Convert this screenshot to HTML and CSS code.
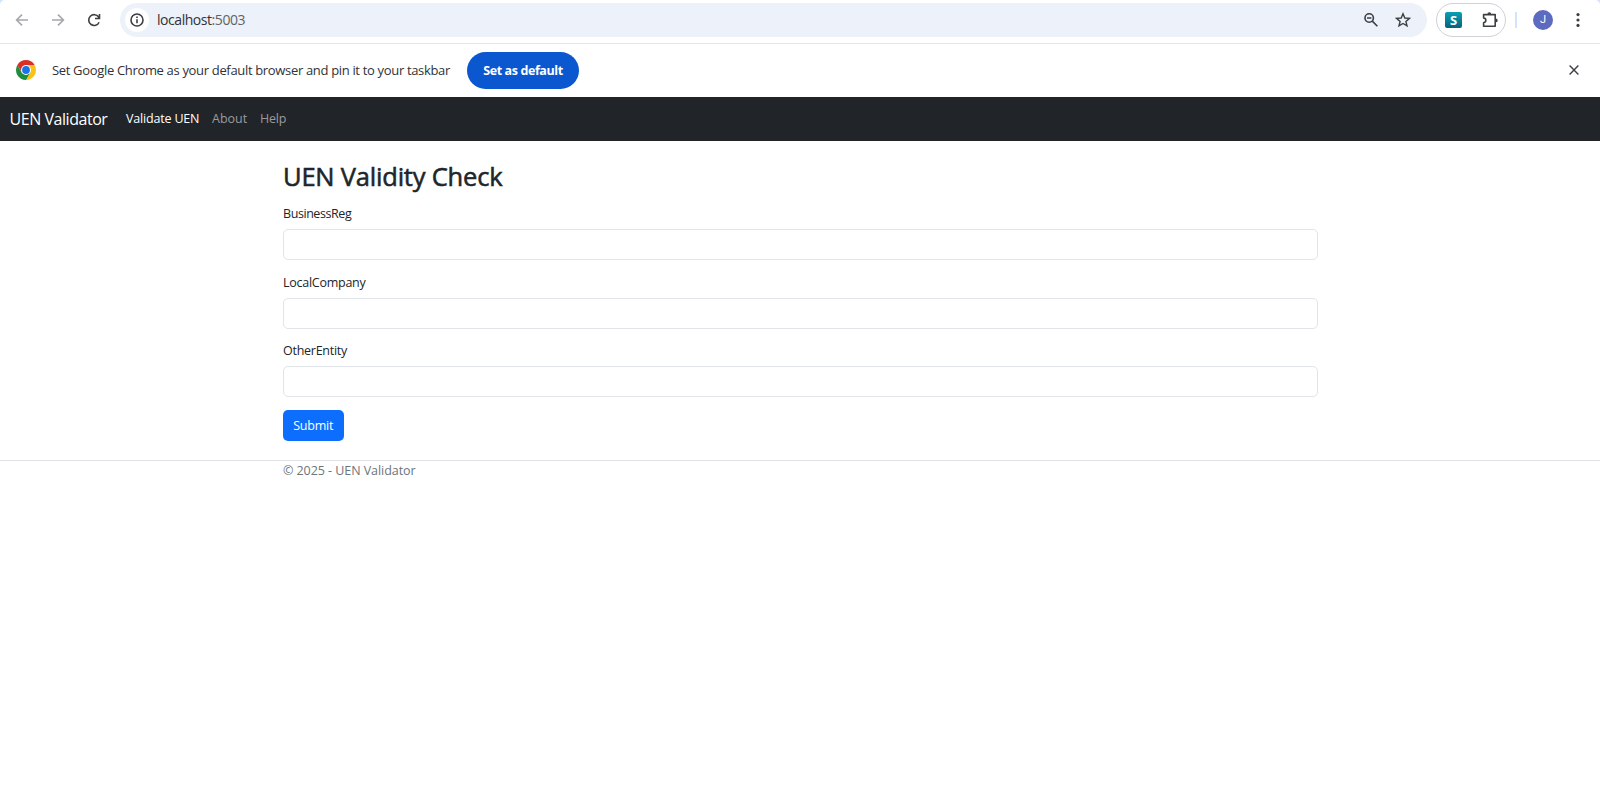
FILE: index.html
```html
<!DOCTYPE html>
<html lang="en">
<head>
<meta charset="utf-8">
<title>UEN Validator</title>
<link rel="stylesheet" href="styles.css">
</head>
<body>
<div class="frame">
<header class="toolbar">
  <div class="nav-buttons">
    <svg class="faded" width="16" height="16" viewBox="0 0 16 16"><path d="M14 8H2.8M8 2.6 2.6 8 8 13.4"/></svg>
    <svg class="faded" width="16" height="16" viewBox="0 0 16 16"><path d="M2 8h11.2M8 2.6 13.4 8 8 13.4"/></svg>
    <svg width="16" height="16" viewBox="0 0 16 16"><path d="M13.1 10.2A5.4 5.4 0 1 1 12.6 5L13.6 6.1M13.5 2v4.5H9"/></svg>
  </div>
  <div class="address">
    <span class="site-info"><svg width="16" height="16" viewBox="0 0 16 16"><circle cx="8" cy="8" r="6"/><path d="M8 7.2v4M8 4.5v1.6"/></svg></span>
    <span class="url">localhost<span class="port">:5003</span></span>
    <svg class="zoom-icon" width="16" height="16" viewBox="0 0 16 16"><circle cx="6.2" cy="6" r="4.2"/><path d="M4 6h4.4M9.3 9.1l5.1 5.1"/></svg>
    <svg class="star" width="16" height="16" viewBox="0 0 16 16"><path d="M8 1.8 9.8 6l4.6.4-3.5 3 1.1 4.5L8 11.5l-4 2.4 1.1-4.5-3.5-3L6.2 6z"/></svg>
  </div>
  <div class="extensions">
    <span class="ext-s">S</span>
    <svg width="18" height="18" viewBox="0 0 18 18"><path d="M2.6 3.6h11.6v11.6H2.6v-3.4c3-.5 3-4.4 0-4.9z" stroke-linejoin="round"/><path class="solid" d="M6.4 3.2a1.9 1.9 0 0 1 3.8 0zM14.8 7.5a1.9 1.9 0 0 1 0 3.8z"/></svg>
  </div>
  <span class="divider"></span>
  <span class="avatar">J</span>
  <svg class="more" width="6" height="16" viewBox="0 0 6 16"><circle cx="3" cy="2.6" r="1.6"/><circle cx="3" cy="8" r="1.6"/><circle cx="3" cy="13.4" r="1.6"/></svg>
</header>
</div>
<section class="infobar">
  <svg class="chrome" width="20" height="20" viewBox="0 0 20 20"><path fill="#d93025" d="M1.34 5A10 10 0 0 1 18.66 5H10L5.67 12.5z"/><path fill="#fbc116" d="M18.66 5A10 10 0 0 1 10 20l4.33-7.5L10 5z"/><path fill="#1e8e3e" d="M10 20A10 10 0 0 1 1.34 5l4.33 7.5h8.66z"/><circle cx="10" cy="10" r="5" fill="#fff"/><circle cx="10" cy="10" r="3.9" fill="#1a73e8"/></svg>
  <span class="info-text">Set Google Chrome as your default browser and pin it to your taskbar</span>
  <button class="default-btn">Set as default</button>
  <svg class="close" width="12" height="12" viewBox="0 0 12 12"><path d="M1.6 1.6l8.8 8.8M10.4 1.6l-8.8 8.8"/></svg>
</section>
<nav class="navbar">
  <a class="brand">UEN Validator</a>
  <a class="link active">Validate UEN</a>
  <a class="link about">About</a>
  <a class="link help">Help</a>
</nav>
<main class="container">
  <h1>UEN Validity Check</h1>
  <form>
    <div class="field"><label class="l-business" for="b">BusinessReg</label><input id="b" type="text"></div>
    <div class="field"><label class="l-local" for="l">LocalCompany</label><input id="l" type="text"></div>
    <div class="field"><label class="l-other" for="o">OtherEntity</label><input id="o" type="text"></div>
    <button class="submit" type="button">Submit</button>
  </form>
</main>
<footer class="footer"><div class="container copy">© 2025 - UEN Validator</div></footer>
</body>
</html>
```
FILE: styles.css
```css
* { box-sizing: border-box; }
body { margin: 0; background: #fff; color: #212529; font-family: "Segoe UI", "Open Sans", "Noto Sans", sans-serif; font-size: 12.5px; }
svg { fill: none; stroke: #3c4043; stroke-width: 1.6; flex: none; }
button, input { font-family: inherit; margin: 0; }
span, a, label, h1, button, .copy { white-space: nowrap; }

.frame { background: #d3e3fd; }
.toolbar { height: 44px; display: flex; align-items: center; padding: 0 18px 4px 14px; border-bottom: 1px solid #e3e5e8; background: #fff; border-radius: 5px 5px 0 0; }
.nav-buttons { display: flex; gap: 20px; width: 106px; flex: none; }
.faded { stroke: #a5a7aa; }
.address { height: 34px; width: 1307px; flex: none; background: #ecf1fa; border-radius: 17px; display: flex; align-items: center; padding: 0 16px 0 5px; }
.site-info { width: 24px; height: 24px; border-radius: 50%; background: #fff; display: grid; place-items: center; }
.url { margin-left: 8px; font-size: 14px; letter-spacing: -.45px; color: #303236; }
.port { color: #5f6368; }
.zoom-icon { margin-left: auto; }
.star { margin-left: 16px; stroke-width: 1.4; }
.extensions { width: 70px; height: 34px; flex: none; margin-left: 9px; border: 1px solid #cfd1d4; border-radius: 17px; display: flex; align-items: center; justify-content: space-between; padding: 0 6px 0 8px; }
.ext-s { width: 17px; height: 16px; border-radius: 2px; background: linear-gradient(#0aa0b4, #08627a); color: #fff; font: bold 13px/16px "Open Sans", sans-serif; text-align: center; }
.solid { fill: #3c4043; stroke: none; }
.divider { width: 2px; height: 16px; flex: none; background: #d3e3fd; margin-left: 9px; }
.avatar { width: 20px; height: 20px; flex: none; border-radius: 50%; margin-left: 16px; background: #5c6bc0; color: #fff; font: 11px/20px Roboto, sans-serif; text-align: center; }
.more { margin-left: 22px; fill: #3c4043; stroke: none; }

.infobar { height: 53px; display: flex; align-items: center; padding: 0 20px 1px 16px; }
.chrome { stroke: none; }
.info-text { margin-left: 16px; width: 415px; font-size: 13px; letter-spacing: -.33px; color: #303236; }
.default-btn { width: 112px; height: 37px; border: 0; border-radius: 19px; background: #0b57d0; color: #fff; font-size: 12.5px; font-weight: 700; letter-spacing: -.4px; padding: 0; }
.close { margin-left: auto; stroke-width: 1.4; }

.navbar { height: 44px; background: #212529; display: flex; align-items: center; padding-left: 9.5px; color: #fff; }
.brand { width: 116.5px; font-size: 16px; letter-spacing: -.45px; }
.link { font-size: 12.5px; color: #999b9d; padding-bottom: 1px; }
.active { width: 86px; color: #fff; letter-spacing: -.18px; }
.about { width: 48px; }
.help { letter-spacing: -.2px; }

.container { width: 1035px; margin-left: 283px; }
h1 { margin: 0; padding-top: 17px; height: 63px; font-size: 25.5px; line-height: 36px; font-weight: 500; letter-spacing: -.2px; -webkit-text-stroke: .55px #212529; }
.field { height: 68.6px; }
label { display: block; height: 25px; line-height: 20px; }
.l-business { letter-spacing: -.43px; }
.l-local, .l-other { letter-spacing: -.26px; }
input { display: block; width: 100%; height: 31px; border: 1px solid #e1e4e8; border-radius: 5px; background: #fff; }
.submit { display: block; width: 60.5px; height: 31px; border: 0; border-radius: 5px; background: #0d6efd; color: #fff; font-size: 12.5px; letter-spacing: -.2px; padding: 0; }
.footer { margin-top: 19px; border-top: 1px solid #dee2e6; }
.copy { line-height: 20px; letter-spacing: -.06px; color: #6c757d; }
```
